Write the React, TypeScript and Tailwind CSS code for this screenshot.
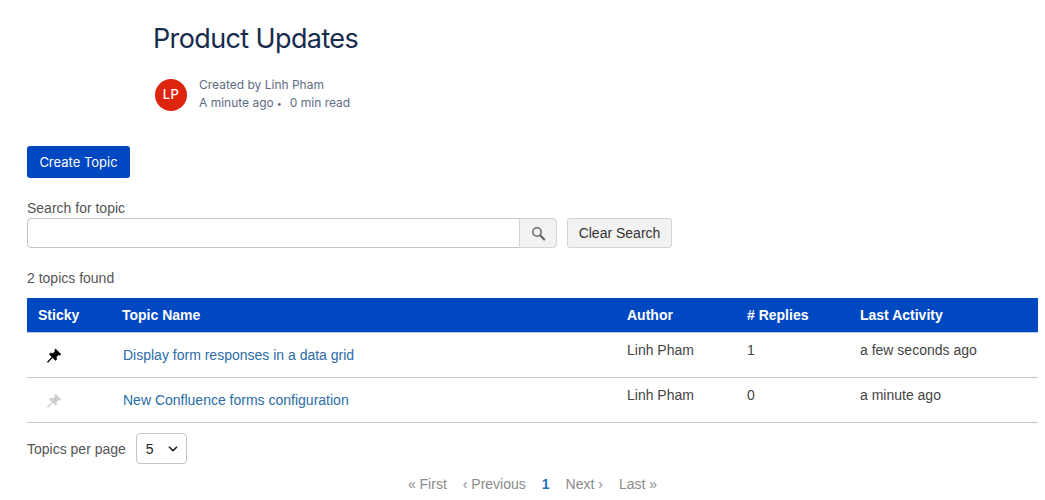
import { ChevronDown } from "lucide-react";

const topics = [
  { name: "Display form responses in a data grid", author: "Linh Pham", replies: 1, activity: "a few seconds ago", sticky: true },
  { name: "New Confluence forms configuration", author: "Linh Pham", replies: 0, activity: "a minute ago", sticky: false },
];

function SearchIcon() {
  return (
    <svg width="15" height="15" viewBox="0 0 15 15" fill="none" stroke="#666" strokeLinecap="round">
      <circle cx="6" cy="6" r="4.2" strokeWidth="1.5" />
      <path d="M9.4 9.4 L13.2 13.4" strokeWidth="2.2" />
    </svg>
  );
}

function PinIcon({ active }: { active: boolean }) {
  return (
    <svg
      width="16"
      height="16"
      viewBox="0 0 16 16"
      strokeWidth="0.6"
      className={active ? "fill-black stroke-black" : "fill-[#cfcfcf] stroke-[#cfcfcf]"}
    >
      <path d="M9.6 1 L15 6.4 L13.8 7.2 L12.6 6.7 L10.3 9 L10.6 11.6 L9.6 12.5 L6.6 9.6 L2 14.5 L1.3 13.8 L6 9 L3.4 6.2 L4.3 5.2 L7 5.5 L9.2 3.2 L8.8 2 Z" />
    </svg>
  );
}

export default function App() {
  return (
    <div className="w-[1045px] h-[500px] overflow-hidden bg-white font-['Liberation_Sans',Arial,sans-serif] text-[14px] text-[#333]">
      {/* Page header */}
      <div className="pl-[153px] pt-[21px]">
        <h1 className="font-['Inter',sans-serif] text-[27px] leading-[36px] font-normal tracking-[-0.62px] text-[#172b4d]">
          Product Updates
        </h1>
        <div className="flex items-center mt-[19px] ml-[2px]">
          <div className="w-[32px] h-[32px] rounded-full bg-[#de250f] text-white flex items-center justify-center font-['Inter',sans-serif] text-[13px] font-medium tracking-[0.5px]">
            LP
          </div>
          <div className="ml-[12px] font-['Inter',sans-serif] text-[12px] leading-[18px] text-[#5e6c84]">
            <div>Created by Linh Pham</div>
            <div>
              A minute ago
              <span className="ml-[3px] mr-[8px] text-[9px]">•</span>
              <span>0 min read</span>
            </div>
          </div>
        </div>
      </div>

      <div className="pl-[27px] pr-[7px]">
        <button className="mt-[33px] block w-[103px] h-[32px] pt-[1px] rounded-[3px] bg-[#0047c2] text-white font-['Inter',sans-serif] text-[13px]">
          Create Topic
        </button>

        {/* Search */}
        <div className="mt-[22px] text-[#555] leading-[16px]">Search for topic</div>
        <div className="flex mt-[2px] h-[30px]">
          <input className="w-[493px] h-[30px] rounded-l-[4px] border border-[#c4c4c4] bg-white" />
          <button className="w-[38px] h-[30px] -ml-px border border-[#d4d4d4] rounded-r-[4px] bg-[#f2f2f2] flex items-center justify-center">
            <SearchIcon />
          </button>
          <button className="w-[105px] h-[30px] ml-[10px] border border-[#d4d4d4] rounded-[3px] bg-[#f2f2f2] text-[#333]">
            Clear Search
          </button>
        </div>

        <div className="mt-[22px] leading-[16px] text-[#555]">2 topics found</div>

        {/* Topics */}
        <table className="mt-[12px] w-[1011px] table-fixed border-separate border-spacing-0">
          <thead>
            <tr className="h-[35px] bg-[#0047c2] text-white text-left">
              <th className="w-[85px] pl-[11px] font-bold border-b border-[#b3c8e8]">Sticky</th>
              <th className="w-[505px] pl-[10px] font-bold border-b border-[#b3c8e8]">Topic Name</th>
              <th className="w-[120px] pl-[10px] font-bold border-b border-[#b3c8e8]">Author</th>
              <th className="w-[113px] pl-[10px] font-bold border-b border-[#b3c8e8]">
                # Replies
              </th>
              <th className="pl-[10px] font-bold border-b border-[#b3c8e8]">Last Activity</th>
            </tr>
          </thead>
          <tbody>
            {topics.map((t) => (
              <tr key={t.name} className="h-[45px]">
                <td className="pl-[19px] pt-[1px] align-middle border-b border-[#c6c6c6]">
                  <PinIcon active={t.sticky} />
                </td>
                <td className="pl-[11px] text-[#2a6ca8] pt-[1px] border-b border-[#c6c6c6]">{t.name}</td>
                <td className="pl-[10px] align-top pt-[7px] text-[#444] border-b border-[#c6c6c6]">{t.author}</td>
                <td className="pl-[10px] align-top pt-[7px] text-[#444] border-b border-[#c6c6c6]">{t.replies}</td>
                <td className="pl-[10px] align-top pt-[7px] text-[#444] border-b border-[#c6c6c6]">{t.activity}</td>
              </tr>
            ))}
          </tbody>
        </table>

        <div className="flex items-center mt-[10px]">
          <span className="text-[#555] pt-[2px]">Topics per page</span>
          <div className="ml-[10px] w-[51px] h-[31px] border border-[#c4c4c4] rounded-[4px] flex items-center justify-between pl-[9px] pr-[6px] text-[#222]">
            <span className="pt-[2px]">5</span>
            <ChevronDown size={14} strokeWidth={3} />
          </div>
        </div>

        {/* Pagination */}
        <div className="flex justify-center mt-[11px] text-[#8a8a8a] leading-[18px] gap-[16px]">
          <span>« First</span>
          <span>‹ Previous</span>
          <span className="font-bold text-[#1f6fb5]">1</span>
          <span>Next ›</span>
          <span>Last »</span>
        </div>
      </div>
    </div>
  );
}
